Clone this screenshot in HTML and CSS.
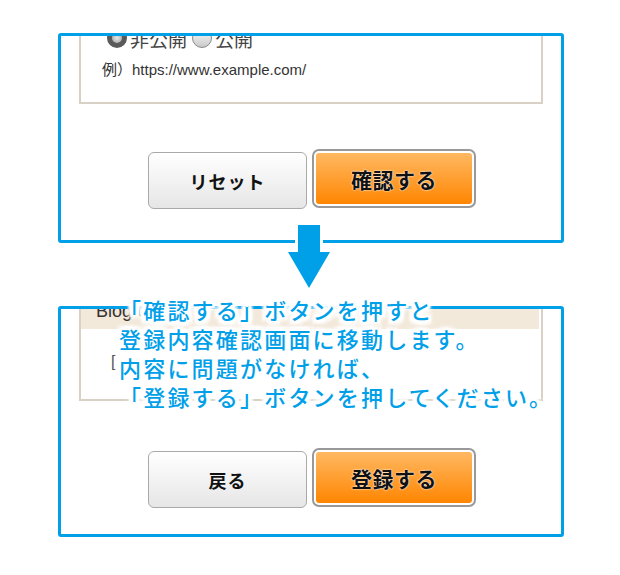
FILE: index.html
```html
<!DOCTYPE html>
<html lang="ja">
<head>
    <meta charset="UTF-8">
    <meta name="viewport" content="width=device-width, initial-scale=1.0">
    <title>登録の流れ</title>
    <link rel="stylesheet" href="styles.css">
</head>
<body>
    <div class="page">

        <!-- 入力画面 -->
        <section class="step step-input">
            <div class="form-box">
                <div class="radio-row">
                    <span class="radio checked"></span><span class="radio-label">非公開</span>
                    <span class="radio"></span><span class="radio-label">公開</span>
                </div>
                <p class="note">例）https://www.example.com/</p>
            </div>
            <div class="btn-row">
                <button class="btn btn-sub">リセット</button>
                <button class="btn btn-main">確認する</button>
            </div>
        </section>

        <svg class="arrow" width="52" height="72" viewBox="0 0 52 72">
            <path d="M15 4 H37 V31 H47 L26 67 L5 31 H15 Z" fill="#00a0e9" stroke="#fff" stroke-width="6" stroke-linejoin="round" paint-order="stroke"/>
        </svg>

        <!-- 確認画面 -->
        <section class="step step-confirm">
            <div class="form-box confirm-box">
                <div class="box-head">Blog URL</div>
                <p class="box-value">[</p>
            </div>
            <div class="btn-row btn-row-confirm">
                <button class="btn btn-sub">戻る</button>
                <button class="btn btn-main">登録する</button>
            </div>
        </section>

        <p class="callout">
            「確認する」ボタンを押すと<br>
            登録内容確認画面に移動します。<br>
            内容に問題がなければ、<br>
            「登録する」ボタンを押してください。
        </p>
    </div>
</body>
</html>
```

FILE: styles.css
```css
* {
    margin: 0;
    padding: 0;
    box-sizing: border-box;
}

body {
    background-color: #fff;
    font-family: "Liberation Sans", "Noto Sans CJK JP", sans-serif;
    color: #333;
}

.page {
    position: relative;
    width: 620px;
    height: 575px;
    padding: 33px 0 0 58px;
}

/* 青い枠 */
.step {
    width: 506px;
    border: 3px solid #00a0e9;
    border-radius: 3px;
    overflow: hidden;
}

.step-input {
    height: 210px;
}

.step-confirm {
    height: 231px;
    margin-top: 63px;
}

/* フォームの枠 */
.form-box {
    margin: -16px 18px 0;
    border: 2px solid #d9d1c5;
    padding: 6px 20px 22px 21px;
}

.radio-row {
    display: flex;
    align-items: center;
    height: 20px;
    padding-left: 5px;
    font-family: "Noto Sans CJK JP", sans-serif;
    font-size: 19px;
    color: #444;
}

.radio {
    width: 20px;
    height: 20px;
    border-radius: 50%;
    border: 1px solid #8a8a8a;
    background: linear-gradient(#fdfdfd, #c9c9c9);
}

.radio.checked {
    border: 5px solid #5a5a5a;
    background: radial-gradient(#e8e8e8, #9a9a9a);
}

.radio-label {
    margin: 0 5px 0 3px;
}

.note {
    margin-top: 12px;
    line-height: 20px;
    font-size: 15px;
    color: #333;
}

.confirm-box {
    margin-top: -8px;
    padding: 0 0 27px;
}

.box-head {
    margin-right: 2px;
    height: 26px;
    padding-left: 15px;
    line-height: 16px;
    font-size: 18px;
    background-color: #f3e9db;
    color: #333;
}

.box-value {
    margin-top: 23px;
    padding-left: 30px;
    line-height: 20px;
    font-size: 16px;
    color: #555;
}

/* ボタン */
.btn-row {
    display: flex;
    justify-content: center;
    align-items: flex-start;
    gap: 5px;
    margin-top: 45px;
    padding-left: 2px;
}

.btn-row-confirm {
    margin-top: 47px;
}

.btn {
    font-family: "Noto Sans CJK JP", sans-serif;
    font-weight: bold;
    color: #111;
    cursor: pointer;
}

.btn-sub {
    width: 159px;
    height: 57px;
    margin-top: 3px;
    border: 1px solid #a9a9a9;
    border-radius: 6px;
    background: linear-gradient(#ffffff, #e6e6e6);
    font-size: 18px;
    letter-spacing: 1px;
}

.btn-main {
    width: 164px;
    height: 59px;
    border: 2px solid #999;
    border-radius: 7px;
    padding: 2px;
    background: linear-gradient(#ffb861, #ff8602) content-box, #fff;
    font-size: 21px;
    letter-spacing: 0.5px;
    text-shadow: 0 0 2px #fff, 0 0 1px #fff;
}

/* 矢印と説明文 */
.arrow {
    position: absolute;
    left: 283px;
    top: 221px;
}

.callout {
    position: absolute;
    left: 119px;
    top: 295px;
    font-family: "Noto Sans CJK JP", sans-serif;
    font-size: 22px;
    font-weight: 500;
    line-height: 29px;
    letter-spacing: 2.2px;
    color: #00a0e9;
    white-space: nowrap;
    text-shadow:
        0 0 2px #fff,
        2px 0 0 #fff, -2px 0 0 #fff,
        0 2px 0 #fff, 0 -2px 0 #fff,
        3px 2px 1px #fff, -3px 2px 1px #fff,
        3px -2px 1px #fff, -3px -2px 1px #fff,
        4px 0 2px #fff, -4px 0 2px #fff,
        0 4px 2px #fff, 0 -4px 2px #fff,
        4px 4px 3px #fff, -4px 4px 3px #fff,
        4px -4px 3px #fff, -4px -4px 3px #fff;
}
```
